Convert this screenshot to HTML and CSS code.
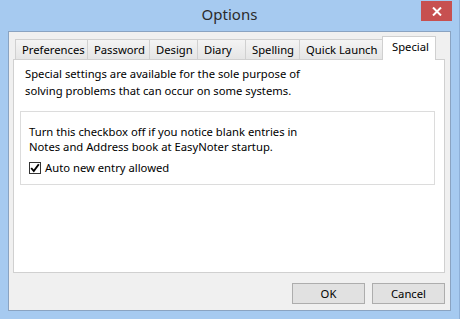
FILE: index.html
```html
<!DOCTYPE html>
<html lang="en">
<head>
    <meta charset="utf-8">
    <title>Options</title>
    <link rel="stylesheet" href="styles.css">
</head>
<body>
<div class="window">
    <div class="titlebar">
        <span></span>
        <h1>Options</h1>
        <button class="close" aria-label="Close">
            <svg width="10" height="9" viewBox="0 0 10 9"><path d="M1 0.5 L9 8.5 M9 0.5 L1 8.5" stroke="#fff" stroke-width="2"/></svg>
        </button>
    </div>
    <div class="client">
        <ul class="tabs">
            <li class="t-pref">Preferences</li>
            <li class="t-pass">Password</li>
            <li class="t-design">Design</li>
            <li class="t-diary">Diary</li>
            <li class="t-spell">Spelling</li>
            <li class="t-quick">Quick Launch</li>
            <li class="t-special active">Special</li>
        </ul>
        <div class="panel">
            <p class="intro">Special settings are available for the sole purpose of<br>solving problems that can occur on some systems.</p>
            <div class="group">
                <p>Turn this checkbox off if you notice blank entries in<br>Notes and Address book at EasyNoter startup.</p>
                <label class="check">
                    <span class="box">
                        <svg width="10" height="10" viewBox="0 0 10 10"><path d="M1.2 5 L3.8 8 L8.8 1.2" fill="none" stroke="#000" stroke-width="1.9"/></svg>
                    </span>
                    Auto new entry allowed
                </label>
            </div>
        </div>
        <div class="buttons">
            <button class="btn">OK</button>
            <button class="btn">Cancel</button>
        </div>
    </div>
</div>
</body>
</html>
```
FILE: styles.css
```css
* {
    margin: 0;
    padding: 0;
    box-sizing: border-box;
}

body {
    width: 460px;
    height: 319px;
    font: normal 11.25px "Segoe UI", "Noto Sans", sans-serif;
    color: #000;
    background: #a6caf0;
}

.window {
    width: 460px;
    height: 319px;
    padding: 0 8px 8px;
    background: #a6caf0;
    border-right: 1px solid #8eb0d8;
}

.titlebar {
    height: 31px;
    display: grid;
    grid-template-columns: 1fr auto 1fr;
    align-items: start;
}

.titlebar h1 {
    font-size: 15px;
    font-weight: normal;
    color: #2b2b2b;
    line-height: 29px;
}

.close {
    justify-self: end;
    margin-right: -1px;
    margin-top: 1px;
    width: 31px;
    height: 20px;
    border: none;
    background: #c75050;
    display: flex;
    align-items: center;
    justify-content: center;
}

.client {
    height: 280px;
    background: #f0f0f0;
    border: 1px solid #8aa3c1;
    padding: 4px 5px 0 4px;
    display: flex;
    flex-direction: column;
}

.tabs {
    list-style: none;
    display: flex;
    align-items: flex-end;
    height: 23px;
    padding-left: 2px;
    position: relative;
    z-index: 1;
}

.tabs li {
    flex: none;
    white-space: nowrap;
    height: 20px;
    line-height: 19px;
    padding-left: 6px;
    border: 1px solid #d0d0d0;
    border-bottom: none;
    border-left: none;
    background: linear-gradient(#f4f4f4, #e5e5e5);
}

.tabs li.t-pref {
    width: 73px;
    border-left: 1px solid #d0d0d0;
}

.t-pass { width: 62px; }
.t-design { width: 48px; }
.t-diary { width: 48px; }
.t-spell { width: 54px; }
.t-quick { width: 83px; }

.tabs li.active {
    width: 54px;
    height: 24px;
    line-height: 20px;
    margin-left: -1px;
    margin-bottom: -1px;
    padding-left: 9px;
    background: #fff;
    border-left: 1px solid #d0d0d0;
}

.panel {
    height: 214px;
    background: #fff;
    border: 1px solid #d0d0d0;
    padding: 5px 9px 0 6px;
}

.intro {
    line-height: 17px;
    padding-left: 5px;
}

.group {
    margin-top: 12px;
    height: 74px;
    border: 1px solid #dcdcdc;
    padding: 12px 8px 0 8px;
    line-height: 15px;
}

.check {
    display: flex;
    align-items: center;
    gap: 4px;
    margin-top: 6px;
}

.box {
    width: 12px;
    height: 12px;
    border: 1px solid #333;
    background: #fff;
    display: flex;
    align-items: center;
    justify-content: center;
}

.buttons {
    display: flex;
    justify-content: flex-end;
    gap: 7px;
    margin-top: 10px;
}

.btn {
    width: 73px;
    height: 21px;
    font: inherit;
    background: #e1e1e1;
    border: 1px solid #adadad;
    color: #000;
}
```
